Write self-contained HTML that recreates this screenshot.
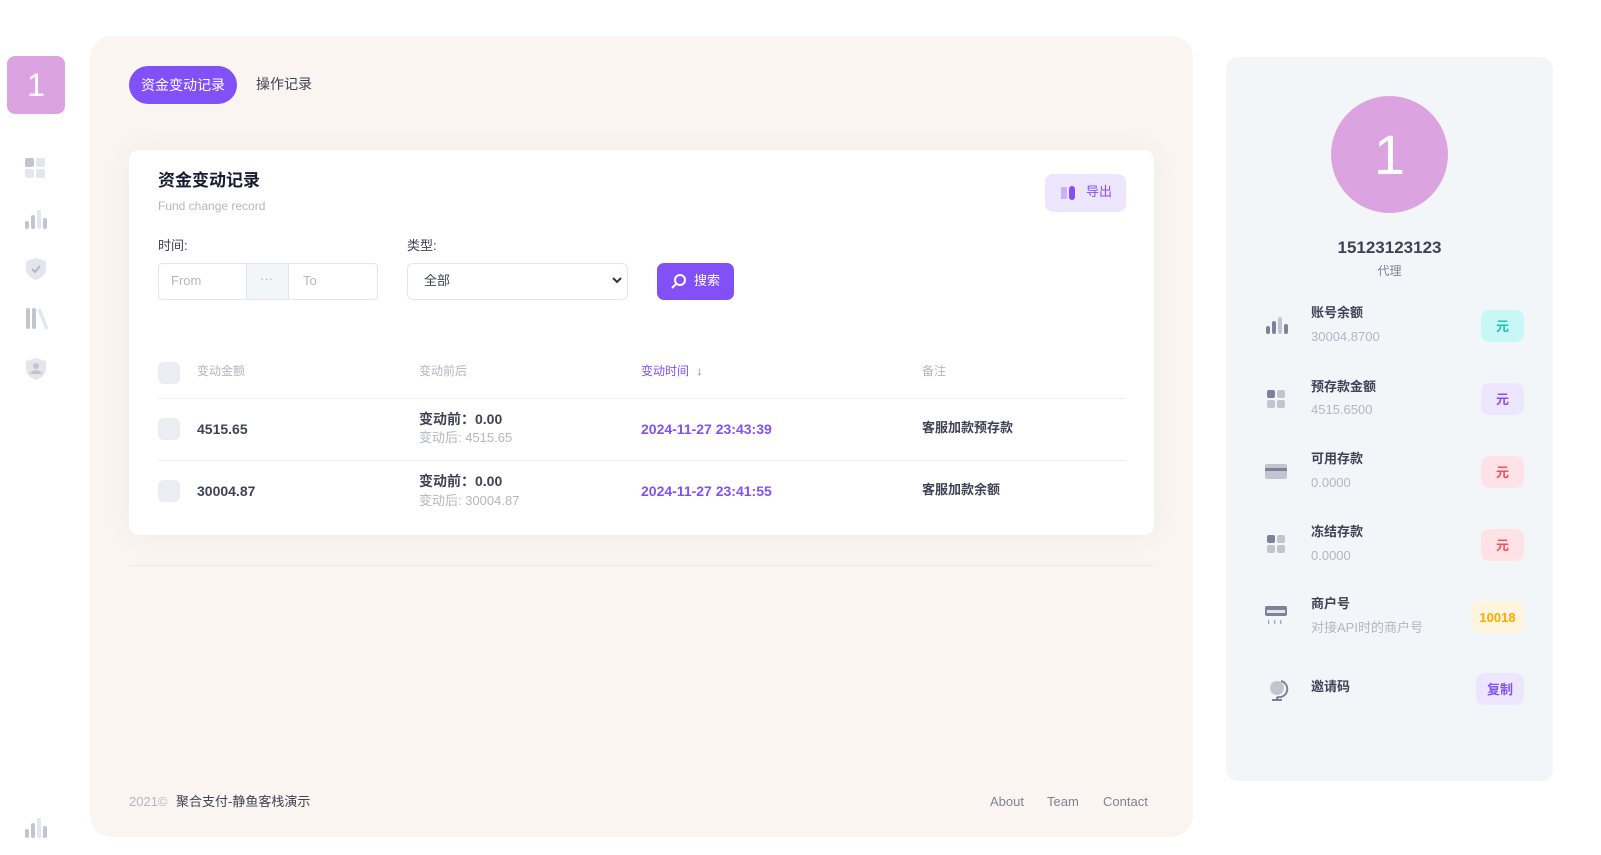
<!DOCTYPE html>
<html><head><meta charset="utf-8"><style>
*{box-sizing:border-box;margin:0;padding:0}
body{width:1601px;height:855px;background:#fff;font-family:"Liberation Sans","Noto Sans CJK SC",sans-serif;position:relative;overflow:hidden;color:#3f4254;line-height:1.15}
.a{position:absolute}
.logo{left:7px;top:56px;width:58px;height:58px;background:#dba4e0;border-radius:8px;color:#fff;font-size:32px;display:flex;align-items:center;justify-content:center}
.main{left:90px;top:36px;width:1103px;height:801px;background:#faf5f1;border-radius:22px}
.tab{left:129px;top:66px;width:108px;height:38px;background:#8250f7;border-radius:19px;color:#fff;font-size:14px;display:flex;align-items:center;justify-content:center;line-height:1}
.card{left:129px;top:150px;width:1025px;height:385px;background:#fff;border-radius:10px;box-shadow:0 0 30px rgba(80,60,40,.06)}
.t{font-size:13px;white-space:nowrap;line-height:1.15}
.muted{color:#b5b5c3}
.purple{color:#8250f7}
.cb{width:22px;height:22px;border-radius:6px;background:#ebedf3}
.line{height:1px;background:#ebedf3}
.right{left:1226px;top:57px;width:327px;height:724px;background:#f3f6f9;border-radius:12px}
.badge{height:32px;border-radius:8px;display:flex;align-items:center;justify-content:center;font-size:13px;font-weight:bold;line-height:1}
</style></head><body>
<div class="a logo">1</div>
<svg class="a" style="left:25px;top:158px" width="22" height="20"><rect x="0" y="0" width="9" height="9" rx="2" fill="#c4c4d0"/><rect x="11" y="0" width="9" height="9" rx="2" fill="#e4e6ee"/><rect x="0" y="11" width="9" height="9" rx="2" fill="#e4e6ee"/><rect x="11" y="11" width="9" height="9" rx="2" fill="#e4e6ee"/></svg>
<svg class="a" style="left:25px;top:210px" width="22" height="20"><rect x="0" y="11" width="4" height="8" rx="2" fill="#c4c4d0"/><rect x="6" y="5" width="4" height="14" rx="2" fill="#c4c4d0"/><rect x="12" y="0" width="4" height="19" rx="2" fill="#e4e6ee"/><rect x="18" y="8" width="4" height="11" rx="2" fill="#c4c4d0"/></svg>
<svg class="a" style="left:25px;top:257px" width="22" height="24"><path d="M11 1 L21 4 V12 C21 18 16 21 11 23 C6 21 1 18 1 12 V4 Z" fill="#e4e6ee"/><path d="M7 12 l3 3 5-6" stroke="#b5b5c3" stroke-width="2" fill="none"/></svg>
<svg class="a" style="left:25px;top:307px" width="24" height="24"><rect x="1" y="1" width="4" height="21" rx="2" fill="#c4c4d0"/><rect x="7" y="1" width="4" height="21" rx="2" fill="#c4c4d0"/><path d="M14 2 L22 22" stroke="#e4e6ee" stroke-width="3.5"/></svg>
<svg class="a" style="left:25px;top:357px" width="22" height="24"><path d="M11 1 L21 4 V12 C21 18 16 21 11 23 C6 21 1 18 1 12 V4 Z" fill="#e4e6ee"/><circle cx="11" cy="9" r="3" fill="#c4c4d0"/><path d="M5 17 C6 12 16 12 17 17 Z" fill="#c4c4d0"/></svg>
<svg class="a" style="left:25px;top:818px" width="22" height="20"><rect x="0" y="11" width="4" height="9" rx="2" fill="#c4c4d0"/><rect x="6" y="5" width="4" height="15" rx="2" fill="#c4c4d0"/><rect x="12" y="0" width="4" height="20" rx="2" fill="#e4e6ee"/><rect x="18" y="8" width="4" height="12" rx="2" fill="#c4c4d0"/></svg>

<div class="a main"></div>
<div class="a tab">资金变动记录</div>
<div class="a t" style="left:256px;top:76px;font-size:14px;color:#3f4254">操作记录</div>
<div class="a card"></div>
<div class="a" style="left:158px;top:171px;font-size:17px;font-weight:bold;color:#181c32;line-height:1.15">资金变动记录</div>
<div class="a t muted" style="left:158px;top:200px;font-size:12px">Fund change record</div>
<div class="a" style="left:1045px;top:174px;width:81px;height:38px;background:#eee5ff;border-radius:8px"></div>
<svg class="a" style="left:1060px;top:185px" width="16" height="16"><rect x="1" y="2" width="6" height="12" fill="#c9b2fb"/><rect x="9" y="1" width="6" height="14" rx="3" fill="#8250f7"/></svg>
<div class="a t purple" style="left:1086px;top:185px">导出</div>
<div class="a t" style="left:158px;top:239px">时间:</div>
<div class="a t" style="left:407px;top:239px">类型:</div>
<div class="a" style="left:158px;top:263px;width:220px;height:37px;border:1px solid #e4e6ef;border-radius:4px;background:#fff"></div>
<div class="a" style="left:246px;top:264px;width:43px;height:35px;background:#f3f6f9;border-left:1px solid #e4e6ef;border-right:1px solid #e4e6ef"></div>
<div class="a t" style="left:171px;top:274px;color:#b5b5c3">From</div>
<div class="a t" style="left:260px;top:272px;color:#b5b5c3">···</div>
<div class="a t" style="left:303px;top:274px;color:#b5b5c3">To</div>
<div class="a" style="left:407px;top:263px;width:221px;height:37px;border:1px solid #e4e6ef;border-radius:6px;background:#fff"></div>
<div class="a t" style="left:424px;top:274px;color:#3f4254">全部</div>
<svg class="a" style="left:612px;top:277px" width="10" height="8"><path d="M1 1 L5 5 L9 1" stroke="#333" stroke-width="2" fill="none"/></svg>
<div class="a" style="left:657px;top:263px;width:77px;height:37px;background:#8250f7;border-radius:7px"></div>
<svg class="a" style="left:671px;top:273px" width="16" height="16"><circle cx="9" cy="7" r="5" stroke="#fff" stroke-width="2" fill="none"/><path d="M5 11 L1 15" stroke="#fff" stroke-width="2"/></svg>
<div class="a t" style="left:694px;top:274px;color:#fff">搜索</div>

<div class="a cb" style="left:158px;top:362px"></div>
<div class="a t muted" style="left:197px;top:365px;font-size:12px">变动金额</div>
<div class="a t muted" style="left:419px;top:365px;font-size:12px">变动前后</div>
<div class="a t purple" style="left:641px;top:365px;font-size:12px">变动时间 <span style="margin-left:4px">↓</span></div>
<div class="a t muted" style="left:922px;top:365px;font-size:12px">备注</div>
<div class="a line" style="left:158px;top:398px;width:968px"></div>
<div class="a cb" style="left:158px;top:418px"></div>
<div class="a t" style="left:197px;top:421px;font-size:14px;font-weight:bold">4515.65</div>
<div class="a t" style="left:419px;top:411px;font-size:14px;font-weight:bold">变动前：0.00</div>
<div class="a t muted" style="left:419px;top:431px">变动后: 4515.65</div>
<div class="a t purple" style="left:641px;top:421px;font-size:14px;font-weight:bold">2024-11-27 23:43:39</div>
<div class="a t" style="left:922px;top:421px;font-weight:bold">客服加款预存款</div>
<div class="a line" style="left:158px;top:460px;width:968px"></div>
<div class="a cb" style="left:158px;top:480px"></div>
<div class="a t" style="left:197px;top:483px;font-size:14px;font-weight:bold">30004.87</div>
<div class="a t" style="left:419px;top:473px;font-size:14px;font-weight:bold">变动前：0.00</div>
<div class="a t muted" style="left:419px;top:494px">变动后: 30004.87</div>
<div class="a t purple" style="left:641px;top:483px;font-size:14px;font-weight:bold">2024-11-27 23:41:55</div>
<div class="a t" style="left:922px;top:483px;font-weight:bold">客服加款余额</div>
<div class="a line" style="left:129px;top:565px;width:1025px;background:#efe9e4"></div>
<div class="a t" style="left:129px;top:795px;color:#b5b5c3">2021©</div>
<div class="a t" style="left:176px;top:795px;color:#3f4254">聚合支付-静鱼客栈演示</div>
<div class="a t" style="left:990px;top:795px;color:#7e8299">About</div>
<div class="a t" style="left:1047px;top:795px;color:#7e8299">Team</div>
<div class="a t" style="left:1103px;top:795px;color:#7e8299">Contact</div>

<div class="a right"></div>
<div class="a" style="left:1331px;top:96px;width:117px;height:117px;border-radius:50%;background:#dba4e0;color:#fff;font-size:56px;display:flex;align-items:center;justify-content:center;line-height:1">1</div>
<div class="a" style="left:1226px;top:238px;width:327px;text-align:center;font-size:17px;font-weight:bold;color:#3f4254">15123123123</div>
<div class="a" style="left:1226px;top:265px;width:327px;text-align:center;font-size:12px;color:#7e8299">代理</div>

<svg class="a" style="left:1266px;top:317px" width="22" height="18"><rect x="0" y="9" width="4" height="8" rx="2" fill="#7e8299"/><rect x="6" y="4" width="4" height="13" rx="2" fill="#7e8299"/><rect x="12" y="0" width="4" height="17" rx="2" fill="#c4c4d0"/><rect x="18" y="7" width="4" height="10" rx="2" fill="#7e8299"/></svg>
<div class="a t" style="left:1311px;top:306px;font-weight:bold">账号余额</div>
<div class="a t muted" style="left:1311px;top:330px">30004.8700</div>
<div class="a badge" style="left:1481px;top:310px;width:43px;background:#c9f7f5;color:#1bc5bd">元</div>

<svg class="a" style="left:1267px;top:390px" width="20" height="20"><rect x="0" y="0" width="8" height="8" rx="2" fill="#7e8299"/><rect x="10" y="0" width="8" height="8" rx="2" fill="#c4c4d0"/><rect x="0" y="10" width="8" height="8" rx="2" fill="#c4c4d0"/><rect x="10" y="10" width="8" height="8" rx="2" fill="#c4c4d0"/></svg>
<div class="a t" style="left:1311px;top:380px;font-weight:bold">预存款金额</div>
<div class="a t muted" style="left:1311px;top:403px">4515.6500</div>
<div class="a badge" style="left:1481px;top:383px;width:43px;background:#eee5ff;color:#8250f7">元</div>

<svg class="a" style="left:1265px;top:464px" width="24" height="16"><rect x="0" y="0" width="22" height="15" rx="2" fill="#c4c4d0"/><rect x="0" y="4" width="22" height="3" fill="#7e8299"/></svg>
<div class="a t" style="left:1311px;top:452px;font-weight:bold">可用存款</div>
<div class="a t muted" style="left:1311px;top:476px">0.0000</div>
<div class="a badge" style="left:1481px;top:456px;width:43px;background:#ffe2e5;color:#f64e60">元</div>

<svg class="a" style="left:1267px;top:535px" width="20" height="20"><rect x="0" y="0" width="8" height="8" rx="2" fill="#7e8299"/><rect x="10" y="0" width="8" height="8" rx="2" fill="#c4c4d0"/><rect x="0" y="10" width="8" height="8" rx="2" fill="#c4c4d0"/><rect x="10" y="10" width="8" height="8" rx="2" fill="#c4c4d0"/></svg>
<div class="a t" style="left:1311px;top:525px;font-weight:bold">冻结存款</div>
<div class="a t muted" style="left:1311px;top:549px">0.0000</div>
<div class="a badge" style="left:1481px;top:529px;width:43px;background:#ffe2e5;color:#f64e60">元</div>

<svg class="a" style="left:1265px;top:606px" width="24" height="22"><rect x="0" y="0" width="22" height="10" rx="2" fill="#7e8299"/><rect x="2" y="4" width="18" height="3" fill="#e4e6ee"/><path d="M4 14 q-1 2 0 4 M10 14 q-1 2 0 4 M16 14 q-1 2 0 4" stroke="#a0a3b5" stroke-width="1.3" fill="none"/></svg>
<div class="a t" style="left:1311px;top:597px;font-weight:bold">商户号</div>
<div class="a t muted" style="left:1311px;top:621px">对接API时的商户号</div>
<div class="a badge" style="left:1471px;top:601px;width:53px;background:#fff4de;color:#ffa800">10018</div>

<svg class="a" style="left:1265px;top:678px" width="24" height="24"><circle cx="12" cy="10" r="7" fill="#c4c4d0"/><path d="M16 3 A8 8 0 0 1 12 19" stroke="#7e8299" stroke-width="2" fill="none"/><path d="M12 19 V22 M7 22 H17" stroke="#7e8299" stroke-width="2"/></svg>
<div class="a t" style="left:1311px;top:680px;font-weight:bold">邀请码</div>
<div class="a badge" style="left:1476px;top:673px;width:48px;background:#eee5ff;color:#8250f7">复制</div>
</body></html>
